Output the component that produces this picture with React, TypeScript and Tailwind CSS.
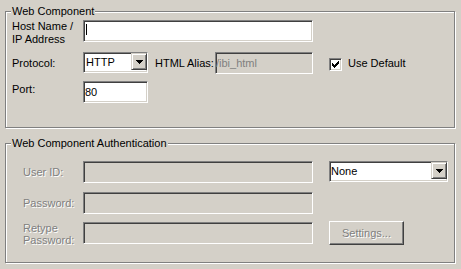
const sunken =
  "border border-t-[#808080] border-l-[#808080] border-b-white border-r-white shadow-[inset_1px_1px_0_#404040,inset_-1px_-1px_0_#d4d0c8]";
const raised =
  "border border-t-[#d4d0c8] border-l-[#d4d0c8] border-b-[#404040] border-r-[#404040] shadow-[inset_1px_1px_0_#fff,inset_-1px_-1px_0_#808080]";
const grayText = "text-[#808080] [text-shadow:1px_1px_0_#fff]";

function Group({ title, className, children }: any) {
  return (
    <div
      className={`relative ml-[5px] w-[450px] border border-[#808080] shadow-[inset_1px_1px_0_#fff,1px_1px_0_#fff] ${className}`}
    >
      <span className="absolute left-[5px] -top-[7px] bg-[#d4d0c8] px-[1px] leading-[13px]">
        {title}
      </span>
      {children}
    </div>
  );
}

function Arrow() {
  return (
    <svg width="7" height="4" viewBox="0 0 7 4" shapeRendering="crispEdges">
      <rect x="0" y="0" width="7" height="1" fill="#000" />
      <rect x="1" y="1" width="5" height="1" fill="#000" />
      <rect x="2" y="2" width="3" height="1" fill="#000" />
      <rect x="3" y="3" width="1" height="1" fill="#000" />
    </svg>
  );
}

function Combo({ value, className }: any) {
  return (
    <div className={`${sunken} flex h-[21px] bg-white ${className}`}>
      <div className="flex-1 flex items-center leading-[13px]">{value}</div>
      <div
        className={`${raised} w-[16px] h-[17px] bg-[#d4d0c8] flex items-center justify-center`}
      >
        <Arrow />
      </div>
    </div>
  );
}

function Check() {
  return (
    <svg width="7" height="7" viewBox="0 0 7 7" shapeRendering="crispEdges">
      {[2, 3, 4, 3, 2, 1, 0].map((y, x) => (
        <rect key={x} x={x} y={y} width="1" height="3" fill="#000" />
      ))}
    </svg>
  );
}

export default function App() {
  return (
    <div className="w-[461px] h-[269px] overflow-hidden bg-[#d4d0c8] pt-[11px] text-[11px] text-black font-['Liberation_Sans',Arial,sans-serif]">
      <Group title="Web Component" className="h-[117px]">
        <div className="pt-[8px] pl-[6px]">
          <div className="flex h-[22px]">
            <div className="w-[71px] shrink-0 leading-[13px]">
              Host Name /
              <br />
              IP Address
            </div>
            <div className={`${sunken} w-[230px] h-[22px] bg-white pl-[2px] pt-[3px]`}>
              <div className="w-[1px] h-[11px] bg-black" />
            </div>
          </div>

          <div className="flex items-center h-[22px] mt-[10px]">
            <div className="w-[71px] shrink-0 leading-[13px]">Protocol:</div>
            <Combo value={<span className="pl-[2px]">HTTP</span>} className="w-[65px] self-start" />
            <div className="ml-[7px] w-[60px] shrink-0 leading-[13px]">HTML Alias:</div>
            <div
              className={`${sunken} w-[98px] h-[22px] flex items-center text-[#808080] leading-[13px]`}
            >
              /ibi_html
            </div>
            <div
              className={`${sunken} ml-[16px] w-[13px] h-[13px] bg-white flex items-center justify-center self-start mt-[6px]`}
            >
              <Check />
            </div>
            <div className="ml-[6px] leading-[13px]">Use Default</div>
          </div>

          <div className="flex h-[22px] mt-[7px]">
            <div className="w-[71px] shrink-0 leading-[13px] mt-[2px]">Port:</div>
            <div
              className={`${sunken} w-[65px] h-[22px] bg-white pl-[1px] flex items-center leading-[13px]`}
            >
              80
            </div>
          </div>
        </div>
      </Group>

      <Group title="Web Component Authentication" className="h-[120px] mt-[15px]">
        <div className="pt-[17px] pl-[6px]">
          <div className="flex items-center h-[22px]">
            <div className={`w-[71px] shrink-0 pl-[11px] leading-[13px] ${grayText}`}>
              User ID:
            </div>
            <div className={`${sunken} w-[230px] h-[22px]`} />
            <Combo
              value={<span className="pl-[1px]">None</span>}
              className="ml-[16px] w-[119px] self-start"
            />
          </div>

          <div className="flex items-center h-[22px] mt-[9px]">
            <div className={`w-[71px] shrink-0 pl-[11px] leading-[13px] ${grayText}`}>
              Password:
            </div>
            <div className={`${sunken} w-[230px] h-[22px]`} />
          </div>

          <div className="flex items-start mt-[7px]">
            <div
              className={`w-[71px] shrink-0 pl-[11px] leading-[12px] mt-[1px] ${grayText}`}
            >
              Retype
              <br />
              Password:
            </div>
            <div className={`${sunken} w-[230px] h-[22px] mt-[1px]`} />
            <button
              className={`ml-[16px] w-[75px] h-[24px] border border-t-white border-l-white border-b-[#404040] border-r-[#404040] shadow-[inset_-1px_-1px_0_#808080] leading-[13px] ${grayText}`}
            >
              Settings...
            </button>
          </div>
        </div>
      </Group>
    </div>
  );
}
